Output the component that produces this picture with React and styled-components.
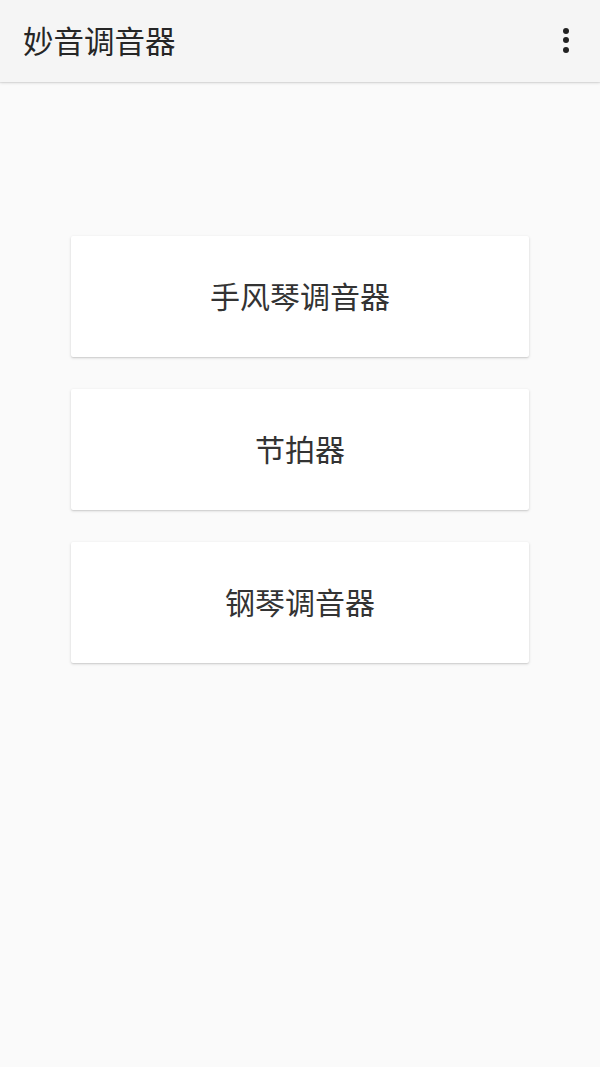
import React from "react";
import styled, { createGlobalStyle } from "styled-components";

const Global = createGlobalStyle`
  html, body { margin: 0; padding: 0; background: #fafafa; }
  body { font-family: "Noto Sans CJK SC", "Noto Sans", sans-serif; }
`;

const Page = styled.div`
  width: 600px;
  min-height: 1067px;
  background: #fafafa;
  display: flex;
  flex-direction: column;
`;

const Toolbar = styled.header`
  height: 82px;
  background: #f5f5f5;
  display: flex;
  align-items: center;
  justify-content: space-between;
  padding: 0 24px 0 23px;
  box-shadow: 0 1px 3px rgba(0, 0, 0, 0.12), 0 1px 1px rgba(0, 0, 0, 0.06);
  position: relative;
  z-index: 1;
`;

const Title = styled.h1`
  margin: 0;
  font-size: 30.5px;
  font-weight: 400;
  color: #262626;
  line-height: 1;
  margin-top: -2px;
`;

const MenuButton = styled.div`
  display: flex;
  flex-direction: column;
  align-items: center;
  gap: 3.5px;
  width: 20px;
  margin-top: -2px;
`;

const Dot = styled.span`
  width: 6px;
  height: 6px;
  border-radius: 50%;
  background: #222;
`;

const List = styled.main`
  display: flex;
  flex-direction: column;
  gap: 32px;
  padding: 154px 71px 0 71px;
`;

const Card = styled.button`
  height: 121px;
  background: #ffffff;
  border: none;
  border-radius: 2px;
  box-shadow: 0 1px 3px rgba(0, 0, 0, 0.16), 0 1px 1px rgba(0, 0, 0, 0.06);
  display: flex;
  align-items: center;
  justify-content: center;
  font-family: "Noto Sans CJK SC", "Noto Sans", sans-serif;
  font-size: 30px;
  font-weight: 400;
  color: #333;
  padding: 0 0 4px 0;
  cursor: pointer;
`;

const items = ["手风琴调音器", "节拍器", "钢琴调音器"];

export default function App() {
  return (
    <Page>
      <Global />
      <Toolbar>
        <Title>妙音调音器</Title>
        <MenuButton>
          <Dot />
          <Dot />
          <Dot />
        </MenuButton>
      </Toolbar>
      <List>
        {items.map((t) => (
          <Card key={t}>{t}</Card>
        ))}
      </List>
    </Page>
  );
}
